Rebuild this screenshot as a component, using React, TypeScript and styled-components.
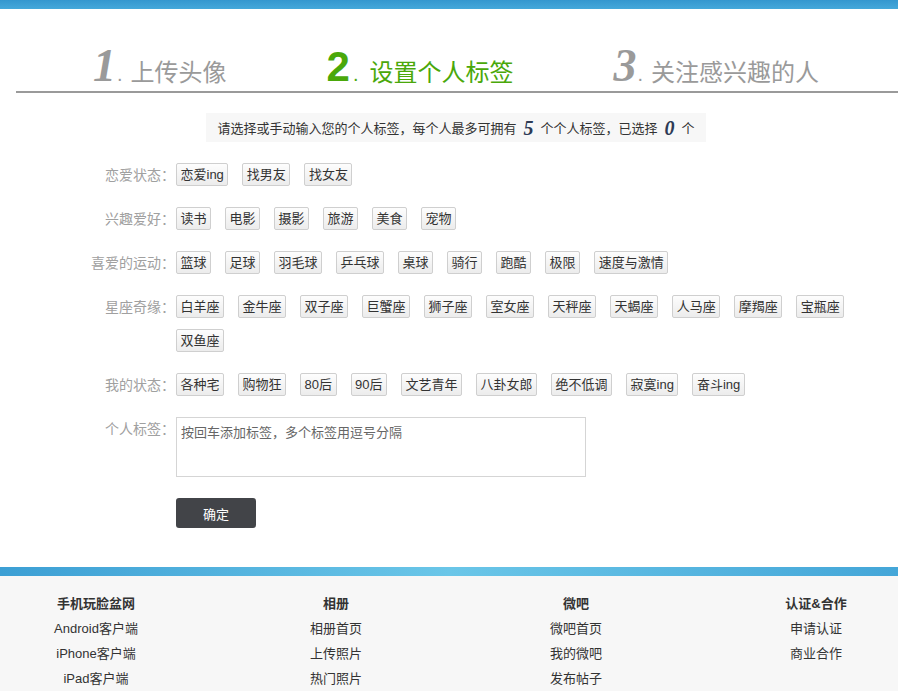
import React from 'react';
import styled, { createGlobalStyle } from 'styled-components';

const GlobalStyle = createGlobalStyle`
  body {
    margin: 0;
    background: #fff;
    font-family: "Liberation Sans", "Noto Sans CJK SC", sans-serif;
    color: #333;
  }
`;

const TopBar = styled.div`
  height: 9px;
  background: linear-gradient(#3497cf, #45a8da);
`;

const Steps = styled.div`
  display: flex;
  align-items: baseline;
  gap: 100px;
  margin-left: 16px;
  padding: 34px 0 6px 77px;
  height: 42px;
  border-bottom: 2px solid #9a9a9a;
`;

const Step = styled.div<{ $active?: boolean }>`
  display: flex;
  align-items: baseline;
  color: ${({ $active }) => ($active ? '#4aa80a' : '#9a9a9a')};
  font-size: 24px;
  white-space: nowrap;
`;

const StepNum = styled.span<{ $active?: boolean }>`
  font-family: ${({ $active }) =>
    $active ? '"Liberation Sans", sans-serif' : '"Liberation Serif", serif'};
  font-style: ${({ $active }) => ($active ? 'normal' : 'italic')};
  font-weight: bold;
  font-size: ${({ $active }) => ($active ? '42px' : '46px')};
  line-height: 1;
`;

const StepDot = styled.span<{ $wide?: boolean }>`
  margin: 0 ${({ $wide }) => ($wide ? '11px' : '8px')} 0 ${({ $wide }) => ($wide ? '3px' : '1px')};
  font-size: 20px;
`;

const Notice = styled.div`
  width: 500px;
  height: 29px;
  margin: 20px 0 0 206px;
  background: #f7f7f7;
  display: flex;
  align-items: center;
  justify-content: center;
  font-size: 13px;
  color: #333;
  font-family: "Noto Sans CJK SC", sans-serif;
`;

const Count = styled.em`
  font-family: "Liberation Serif", serif;
  font-weight: bold;
  font-size: 20px;
  color: #2d3a55;
  margin: 0 7px;
  line-height: 1;
`;

const Form = styled.div`
  padding-top: 21px;
  display: flex;
  flex-direction: column;
  gap: 21px;
`;

const Row = styled.div`
  display: flex;
  align-items: flex-start;
`;

const Label = styled.div`
  width: 175px;
  flex: none;
  text-align: right;
  font-size: 14px;
  line-height: 23px;
  color: #a0a0a0;
  font-family: "Noto Sans CJK SC", sans-serif;
  margin-right: 1px;
`;

const Tags = styled.div`
  display: flex;
  flex-wrap: wrap;
  gap: 11px 14px;
  width: 684px;
`;

const Tag = styled.span`
  height: 23px;
  box-sizing: border-box;
  padding: 0 3.5px;
  border: 1px solid #cfcfcf;
  border-radius: 2px;
  background: linear-gradient(#fdfdfd, #ececec);
  font-size: 13px;
  line-height: 21px;
  color: #333;
  white-space: nowrap;
  font-family: "Liberation Sans", "Noto Sans CJK SC", sans-serif;
`;

const TextArea = styled.textarea`
  width: 410px;
  height: 60px;
  box-sizing: border-box;
  border: 1px solid #d5d5d5;
  padding: 4px 4px;
  resize: none;
  font-size: 13px;
  font-family: "Noto Sans CJK SC", sans-serif;
  color: #666;
  outline: none;
  &::placeholder {
    color: #666;
  }
`;

const Submit = styled.button`
  margin: 0 0 0 176px;
  width: 80px;
  height: 30px;
  border: none;
  border-radius: 3px;
  background: #424448;
  color: #fff;
  font-size: 13px;
  font-family: "Noto Sans CJK SC", sans-serif;
`;

const FooterStripe = styled.div`
  margin-top: 39px;
  height: 9px;
  background: linear-gradient(90deg, #3c9fd4, #6ac6e8 50%, #44a6d8);
`;

const Footer = styled.div`
  background: #f7f7f7;
  height: 116px;
  overflow: hidden;
`;

const FooterCols = styled.div`
  display: grid;
  grid-template-columns: repeat(4, 240px);
  margin-left: -24px;
  padding-top: 15px;
`;

const Col = styled.div`
  display: flex;
  flex-direction: column;
  align-items: center;
  font-size: 13px;
  line-height: 25px;
  color: #333;
`;

const ColTitle = styled.div`
  font-weight: bold;
`;

const rows: { label: string; tags: string[] }[] = [
  { label: '恋爱状态：', tags: ['恋爱ing', '找男友', '找女友'] },
  { label: '兴趣爱好：', tags: ['读书', '电影', '摄影', '旅游', '美食', '宠物'] },
  {
    label: '喜爱的运动：',
    tags: ['篮球', '足球', '羽毛球', '乒乓球', '桌球', '骑行', '跑酷', '极限', '速度与激情'],
  },
  {
    label: '星座奇缘：',
    tags: ['白羊座', '金牛座', '双子座', '巨蟹座', '狮子座', '室女座', '天秤座', '天蝎座', '人马座', '摩羯座', '宝瓶座', '双鱼座'],
  },
  {
    label: '我的状态：',
    tags: ['各种宅', '购物狂', '80后', '90后', '文艺青年', '八卦女郎', '绝不低调', '寂寞ing', '奋斗ing'],
  },
];

const footer = [
  { title: '手机玩脸盆网', links: ['Android客户端', 'iPhone客户端', 'iPad客户端'] },
  { title: '相册', links: ['相册首页', '上传照片', '热门照片'] },
  { title: '微吧', links: ['微吧首页', '我的微吧', '发布帖子'] },
  { title: '认证&合作', links: ['申请认证', '商业合作'] },
];

export default function App() {
  return (
    <>
      <GlobalStyle />
      <TopBar />
      <Steps>
        <Step>
          <StepNum>1</StepNum>
          <StepDot>.</StepDot>上传头像
        </Step>
        <Step $active>
          <StepNum $active>2</StepNum>
          <StepDot $wide>.</StepDot>设置个人标签
        </Step>
        <Step>
          <StepNum>3</StepNum>
          <StepDot>.</StepDot>关注感兴趣的人
        </Step>
      </Steps>
      <Notice>
        请选择或手动输入您的个人标签，每个人最多可拥有<Count>5</Count>个个人标签，已选择<Count>0</Count>个
      </Notice>
      <Form>
        {rows.map((r) => (
          <Row key={r.label}>
            <Label>{r.label}</Label>
            <Tags>
              {r.tags.map((t) => (
                <Tag key={t}>{t}</Tag>
              ))}
            </Tags>
          </Row>
        ))}
        <Row>
          <Label>个人标签：</Label>
          <TextArea placeholder="按回车添加标签，多个标签用逗号分隔" />
        </Row>
        <Submit>确定</Submit>
      </Form>
      <FooterStripe />
      <Footer>
        <FooterCols>
          {footer.map((c) => (
            <Col key={c.title}>
              <ColTitle>{c.title}</ColTitle>
              {c.links.map((l) => (
                <div key={l}>{l}</div>
              ))}
            </Col>
          ))}
        </FooterCols>
      </Footer>
    </>
  );
}
